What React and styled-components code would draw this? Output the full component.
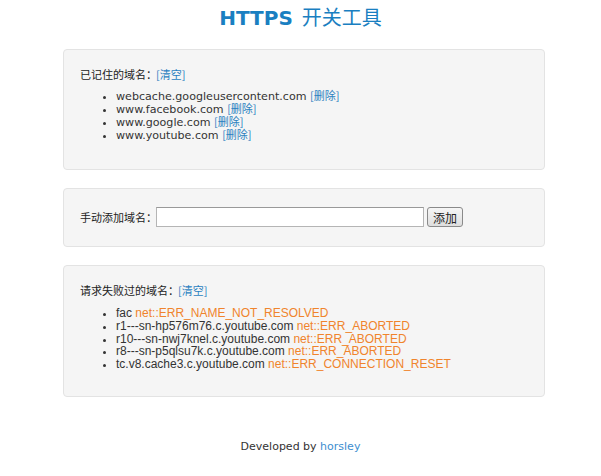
import React from 'react';
import styled, { createGlobalStyle } from 'styled-components';

const GlobalStyle = createGlobalStyle`
  body {
    margin: 0;
    background: #fff;
    font-family: "DejaVu Sans", Verdana, "Noto Sans CJK SC", sans-serif;
    color: #333;
  }
`;

const Page = styled.div`
  width: 601px;
  padding: 4px 0 0;
`;

const Title = styled.h1`
  margin: 0;
  text-align: center;
  font-size: 20px;
  line-height: 26px;
  color: #1a7fc1;
  font-family: "DejaVu Sans", "Noto Sans CJK SC", sans-serif;
  b { font-weight: bold; }
  span { font-weight: normal; font-family: "Noto Sans CJK SC", sans-serif; margin-left: 2px; }
`;

const Well = styled.div`
  margin: ${p => p.$top || 18}px 56px 0 63px;
  background: #f5f5f5;
  border: 1px solid #e3e3e3;
  border-radius: 4px;
  padding: ${p => p.$pad || '17px 16px 28px'};
  box-sizing: border-box;
  height: ${p => p.$h}px;
`;

const Label = styled.div`
  font-family: "Noto Sans CJK SC", sans-serif;
  font-size: 11px;
  line-height: 14px;
  color: #222;
  display: flex;
  align-items: center;
`;

const Link = styled.a`
  color: #2b7fc0;
  text-decoration: none;
  font-family: "Noto Sans CJK SC", sans-serif;
  font-size: 11px;
  line-height: 11px;
  display: inline-block;
  vertical-align: baseline;
  margin-left: ${p => p.$ml || 0}px;
`;

const List = styled.ul`
  margin: 9px 0 0;
  padding-left: 36px;
  list-style: disc;
  font-size: 11.1px;
  line-height: 13px;
  color: #333;
  li { height: 13px; }
  li::marker { font-size: 11px; }
`;

const FailList = styled(List)`
  font-family: "Liberation Sans", Arial, sans-serif;
  font-size: 12px;
  line-height: 12.8px;
  margin-top: 10px;
  li { height: 12.8px; }
`;

const Err = styled.span`
  color: #f0842c;
`;

const AddRow = styled.div`
  display: flex;
  align-items: center;
  gap: 3px;
`;

const Input = styled.input`
  width: 268px;
  height: 20px;
  box-sizing: border-box;
  border: 1px solid #b5b5b5;
  border-top-color: #999;
  background: #fff;
  margin: 0 0 0 -4px;
  padding: 0 3px;
`;

const Button = styled.button`
  height: 20px;
  width: 36px;
  padding: 0;
  box-sizing: border-box;
  border: 1px solid #8a8a8a;
  border-radius: 3px;
  background: linear-gradient(#f6f6f6, #dedede);
  font-family: "Noto Sans CJK SC", sans-serif;
  font-size: 12px;
  color: #222;
`;

const Footer = styled.div`
  margin-top: 43px;
  text-align: center;
  font-size: 11px;
  color: #333;
  a { color: #3d8ed0; text-decoration: none; }
`;

const remembered = [
  'webcache.googleusercontent.com',
  'www.facebook.com',
  'www.google.com',
  'www.youtube.com',
];

const failed = [
  ['fac', 'net::ERR_NAME_NOT_RESOLVED'],
  ['r1---sn-hp576m76.c.youtube.com', 'net::ERR_ABORTED'],
  ['r10---sn-nwj7knel.c.youtube.com', 'net::ERR_ABORTED'],
  ['r8---sn-p5qlsu7k.c.youtube.com', 'net::ERR_ABORTED'],
  ['tc.v8.cache3.c.youtube.com', 'net::ERR_CONNECTION_RESET'],
];

export default function App() {
  return (
    <Page>
      <GlobalStyle />
      <Title><b>HTTPS</b> <span>开关工具</span></Title>
      <Well $top={18} $h={121}>
        <Label>已记住的域名：<Link href="#" $ml={-1}>[清空]</Link></Label>
        <List>
          {remembered.map(d => (
            <li key={d}>{d} <Link href="#">[删除]</Link></li>
          ))}
        </List>
      </Well>
      <Well $top={18} $h={59} $pad="18px 16px">
        <AddRow>
          <Label>手动添加域名：</Label>
          <Input type="text" />
          <Button>添加</Button>
        </AddRow>
      </Well>
      <Well $top={18} $h={132}>
        <Label>请求失败过的域名：<Link href="#" $ml={-1}>[清空]</Link></Label>
        <FailList>
          {failed.map(([d, e]) => (
            <li key={d}>{d} <Err>{e}</Err></li>
          ))}
        </FailList>
      </Well>
      <Footer>Developed by <a href="#">horsley</a></Footer>
    </Page>
  );
}
